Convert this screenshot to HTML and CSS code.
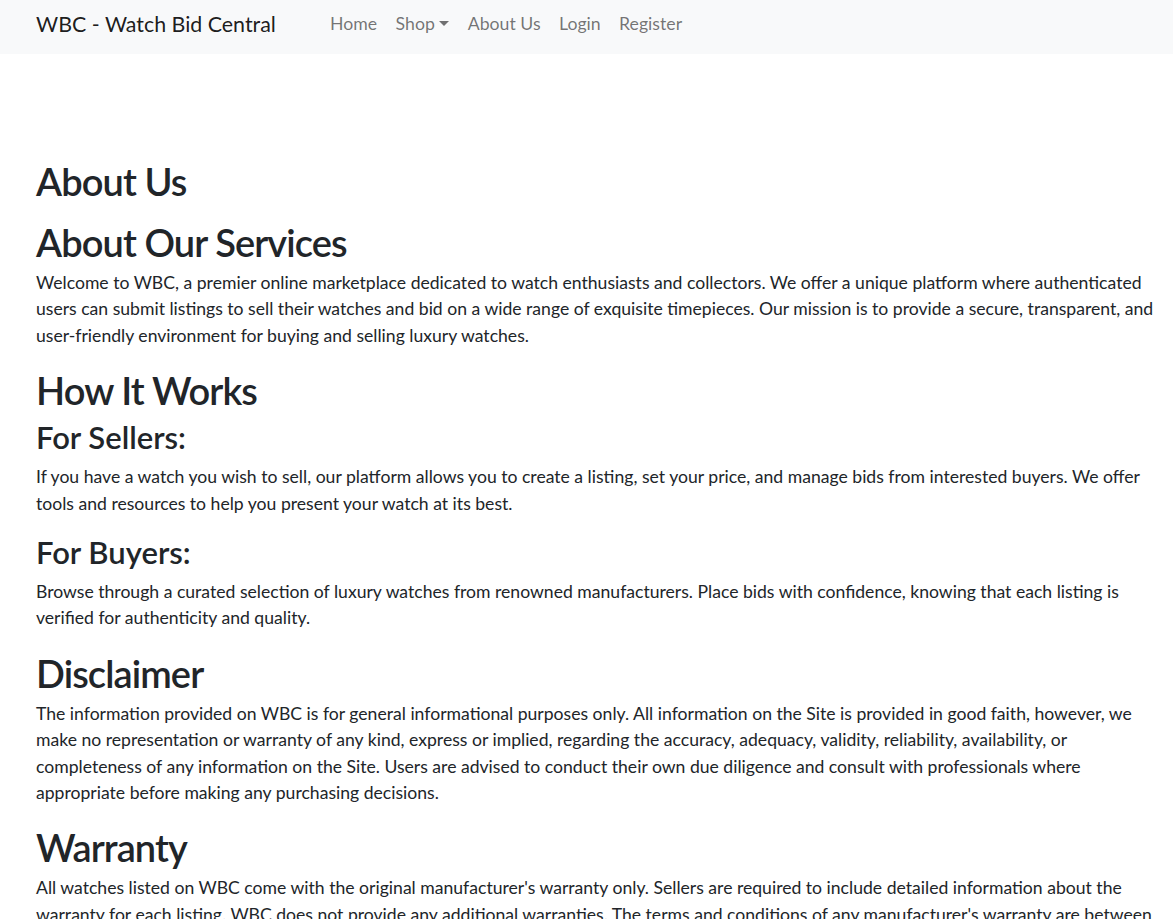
FILE: index.html
```html
<!DOCTYPE html>
<html lang="en">
<head>
<meta charset="utf-8">
<title>About Us - WBC</title>
<link rel="stylesheet" href="styles.css">
</head>
<body>
<nav class="navbar">
  <a class="brand" href="#">WBC - Watch Bid Central</a>
  <ul class="nav">
    <li><a class="nav-link" href="#">Home</a></li>
    <li><a class="nav-link dropdown-toggle" href="#">Shop</a></li>
    <li><a class="nav-link" href="#">About Us</a></li>
    <li><a class="nav-link" href="#">Login</a></li>
    <li><a class="nav-link" href="#">Register</a></li>
  </ul>
</nav>
<main class="content">
  <h1 class="page-title">About Us</h1>
  <h1 class="section-title">About Our Services</h1>
  <p>Welcome to WBC, a premier online marketplace dedicated to watch enthusiasts and collectors. We offer a unique platform where authenticated users can submit listings to sell their watches and bid on a wide range of exquisite timepieces. Our mission is to provide a secure, transparent, and user-friendly environment for buying and selling luxury watches.</p>
  <h1 class="section-title">How It Works</h1>
  <h3 class="sub-title">For Sellers:</h3>
  <p>If you have a watch you wish to sell, our platform allows you to create a listing, set your price, and manage bids from interested buyers. We offer tools and resources to help you present your watch at its best.</p>
  <h3 class="sub-title">For Buyers:</h3>
  <p>Browse through a curated selection of luxury watches from renowned manufacturers. Place bids with confidence, knowing that each listing is verified for authenticity and quality.</p>
  <h1 class="section-title">Disclaimer</h1>
  <p>The information provided on WBC is for general informational purposes only. All information on the Site is provided in good faith, however, we make no representation or warranty of any kind, express or implied, regarding the accuracy, adequacy, validity, reliability, availability, or completeness of any information on the Site. Users are advised to conduct their own due diligence and consult with professionals where appropriate before making any purchasing decisions.</p>
  <h1 class="section-title">Warranty</h1>
  <p>All watches listed on WBC come with the original manufacturer's warranty only. Sellers are required to include detailed information about the warranty for each listing. WBC does not provide any additional warranties. The terms and conditions of any manufacturer's warranty are between the buyer and the manufacturer.</p>
</main>
</body>
</html>
```
FILE: styles.css
```css
* { box-sizing: border-box; }
html, body { margin: 0; padding: 0; }
body {
  font-family: "Lato", "Open Sans", sans-serif;
  font-size: 17.6px;
  line-height: 26.4px;
  color: #212529;
  background: #fff;
}
a { text-decoration: none; }
.navbar {
  display: flex;
  align-items: center;
  height: 54px;
  padding: 0 0 6px 36px;
  background: #f8f9fa;
}
.brand {
  font-size: 21.4px;
  color: rgba(0,0,0,.9);
  margin-right: 45px;
  line-height: 30px;
}
.nav {
  display: flex;
  list-style: none;
  margin: 0;
  padding: 0;
}
.nav-link {
  display: block;
  padding: 0 9.2px;
  color: rgba(0,0,0,.55);
  font-size: 17.7px;
  line-height: 26px;
}
.dropdown-toggle::after {
  content: "";
  display: inline-block;
  margin-left: 4.5px;
  vertical-align: 4.5px;
  border-top: 5.3px solid;
  border-left: 5.3px solid transparent;
  border-right: 5.3px solid transparent;
}
.content {
  padding: 0 1px 0 36px;
}
h1, h3 {
  font-weight: 600;
  margin: 0;
}
.section-title, .page-title {
  font-size: 38px;
  line-height: 48px;
  letter-spacing: -0.9px;
}
.page-title { margin-top: 103px; margin-bottom: 13px; }
.section-title { margin-top: 0; margin-bottom: 4px; }
p { margin: 0 0 17px; }
.sub-title {
  font-size: 31px;
  line-height: 36px;
  margin-bottom: 9px;
}
.section-title + .sub-title { margin-top: 5px; }
```
